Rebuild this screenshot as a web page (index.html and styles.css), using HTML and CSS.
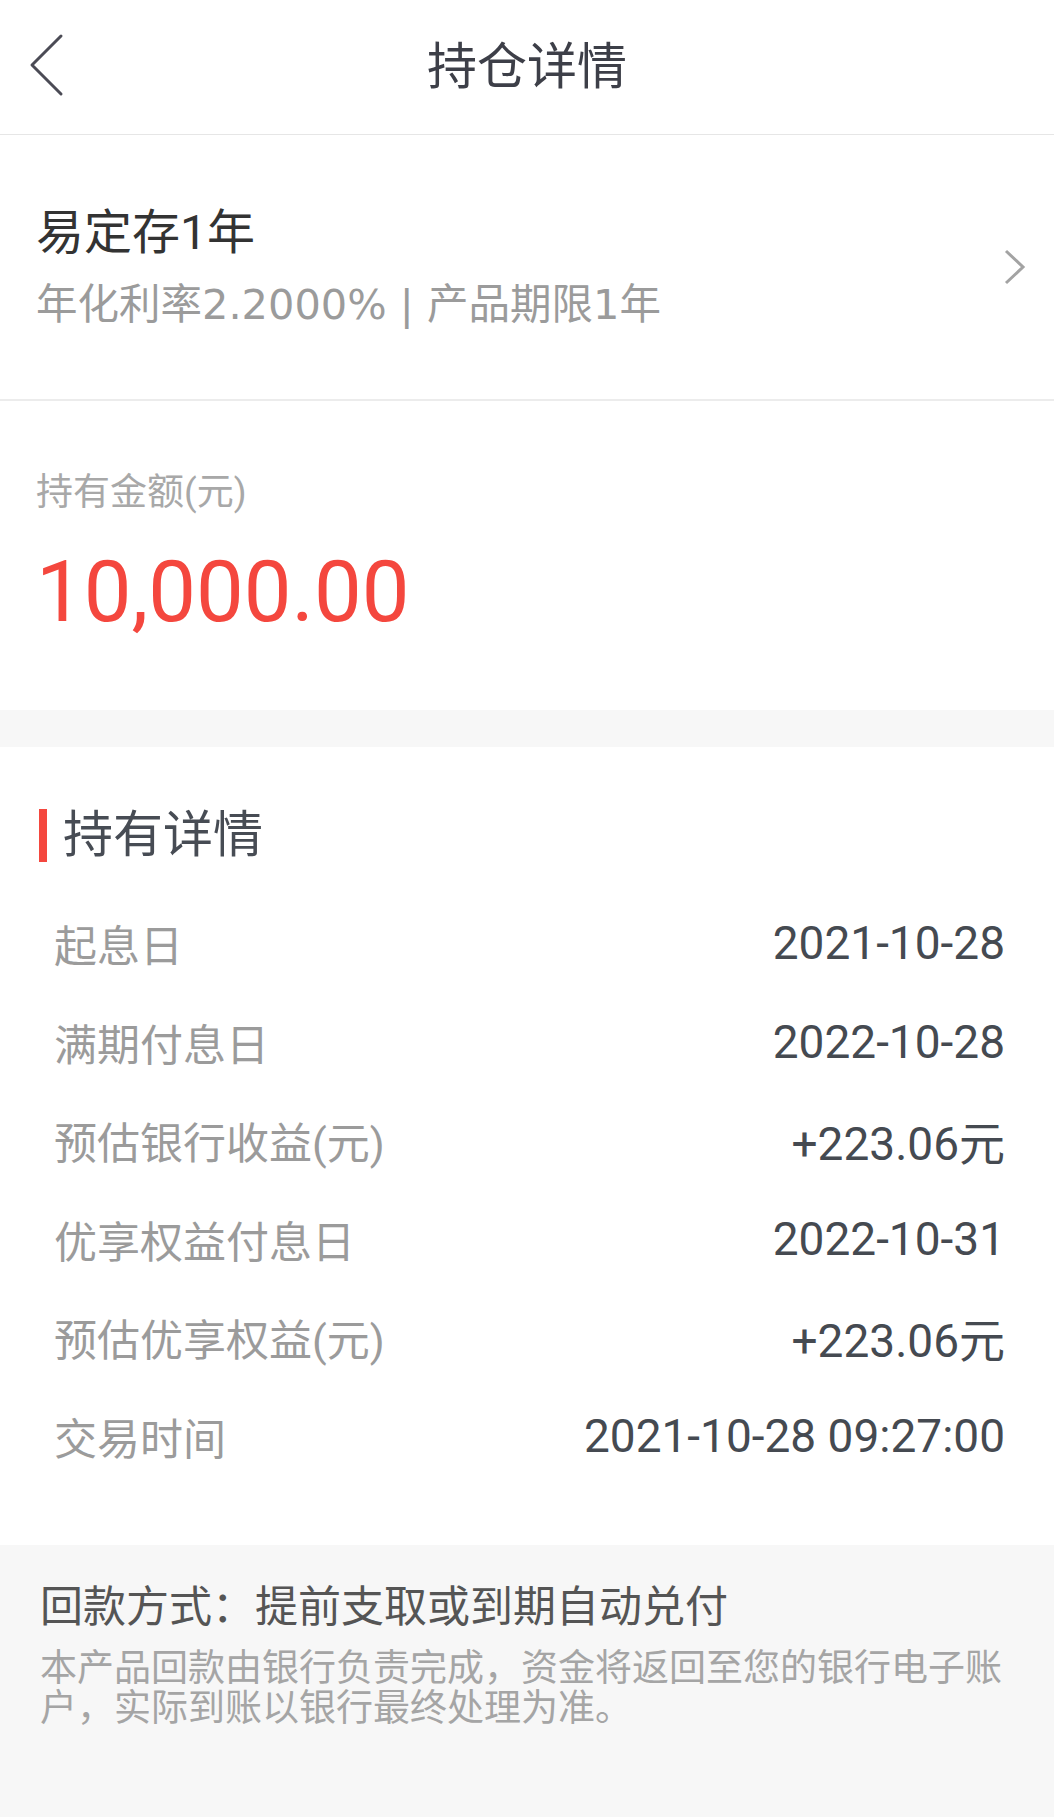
FILE: index.html
```html
<!DOCTYPE html>
<html lang="zh-CN">
  <head>
    <meta charset="UTF-8" />
    <meta name="viewport" content="width=device-width, initial-scale=1.0" />
    <title>持仓详情</title>
    <link rel="stylesheet" href="styles.css">
  </head>

  <body>
    <header class="nav">
      <a class="nav__back" href="#">
        <svg width="40" height="64" viewBox="0 0 40 64">
          <path d="M33 3 L4 32 L33 61" fill="none" stroke="#4b4b55" stroke-width="3" stroke-linejoin="round" stroke-linecap="round" />
        </svg>
      </a>
      <h1 class="nav__title">持仓详情</h1>
    </header>

    <section class="product">
      <div class="product__info">
        <div class="product__name">易定存1年</div>
        <div class="product__desc">年化利率2.2000% | 产品期限1年</div>
      </div>
      <svg class="product__arrow" width="26" height="38" viewBox="0 0 26 38">
        <path d="M4 3 L21 19 L4 35" fill="none" stroke="#a3a3a3" stroke-width="3" />
      </svg>
    </section>

    <section class="amount">
      <div class="amount__label">持有金额(元)</div>
      <div class="amount__value">10,000.00</div>
    </section>

    <section class="detail">
      <h2 class="detail__title">持有详情</h2>
      <div class="detail__list">
        <div class="detail__row">
          <span class="detail__label">起息日</span>
          <span class="detail__value">2021-10-28</span>
        </div>
        <div class="detail__row">
          <span class="detail__label">满期付息日</span>
          <span class="detail__value">2022-10-28</span>
        </div>
        <div class="detail__row">
          <span class="detail__label">预估银行收益(元)</span>
          <span class="detail__value">+223.06元</span>
        </div>
        <div class="detail__row">
          <span class="detail__label">优享权益付息日</span>
          <span class="detail__value">2022-10-31</span>
        </div>
        <div class="detail__row">
          <span class="detail__label">预估优享权益(元)</span>
          <span class="detail__value">+223.06元</span>
        </div>
        <div class="detail__row">
          <span class="detail__label">交易时间</span>
          <span class="detail__value">2021-10-28 09:27:00</span>
        </div>
      </div>
    </section>

    <footer class="notice">
      <div class="notice__title">回款方式：提前支取或到期自动兑付</div>
      <p class="notice__text">本产品回款由银行负责完成，资金将返回至您的银行电子账户，实际到账以银行最终处理为准。</p>
    </footer>
  </body>
</html>
```

FILE: styles.css
```css
* {
  margin: 0;
  padding: 0;
  box-sizing: border-box;
}

body {
  width: 1054px;
  min-height: 1817px;
  font-family: Roboto, "Noto Sans CJK SC", sans-serif;
  background: #f7f7f7;
}

/* top bar */
.nav {
  height: 135px;
  display: flex;
  align-items: center;
  justify-content: center;
  position: relative;
  background: #ffffff;
  border-bottom: 1px solid #e6e6e6;
}

.nav__back {
  position: absolute;
  left: 28px;
  top: 33px;
  display: block;
  height: 64px;
}

.nav__title {
  font-size: 50px;
  font-weight: 400;
  line-height: 60px;
  color: #3d3f48;
}

/* product */
.product {
  display: flex;
  align-items: center;
  justify-content: space-between;
  padding: 68px 26px 69px 36px;
  background: #ffffff;
  border-bottom: 2px solid #ececec;
}

.product__name {
  font-size: 48px;
  line-height: 60px;
  color: #333333;
}

.product__desc {
  margin-top: 17px;
  font-family: "DejaVu Sans", "Noto Sans CJK SC", sans-serif;
  font-size: 41.5px;
  line-height: 50px;
  color: #9b9b9b;
}

/* amount */
.amount {
  padding: 70px 36px 68px;
  background: #ffffff;
}

.amount__label {
  font-size: 37px;
  line-height: 44px;
  color: #a8a8a8;
}

.amount__value {
  margin-top: 27px;
  font-size: 85px;
  line-height: 100px;
  color: #f4473e;
}

/* holding details */
.detail {
  margin-top: 37px;
  padding: 60px 0 60px;
  background: #ffffff;
}

.detail__title {
  display: flex;
  align-items: center;
  gap: 16px;
  padding-left: 39px;
  font-size: 50px;
  font-weight: 400;
  line-height: 56px;
  color: #474c54;
}

.detail__title::before {
  content: "";
  width: 8px;
  height: 53px;
  background: #f4473e;
}

.detail__list {
  margin-top: 31px;
}

.detail__row {
  height: 98.5px;
  display: flex;
  align-items: center;
  justify-content: space-between;
  padding: 0 49px 0 54px;
}

.detail__label {
  font-size: 43px;
  color: #9b9b9b;
}

.detail__value {
  font-size: 46px;
  color: #454a51;
}

/* notice */
.notice {
  padding: 37px 40px 40px;
}

.notice__title {
  font-size: 43px;
  line-height: 50px;
  color: #555555;
}

.notice__text {
  margin-top: 17px;
  font-size: 37px;
  line-height: 40px;
  color: #a5a5a5;
}
```
